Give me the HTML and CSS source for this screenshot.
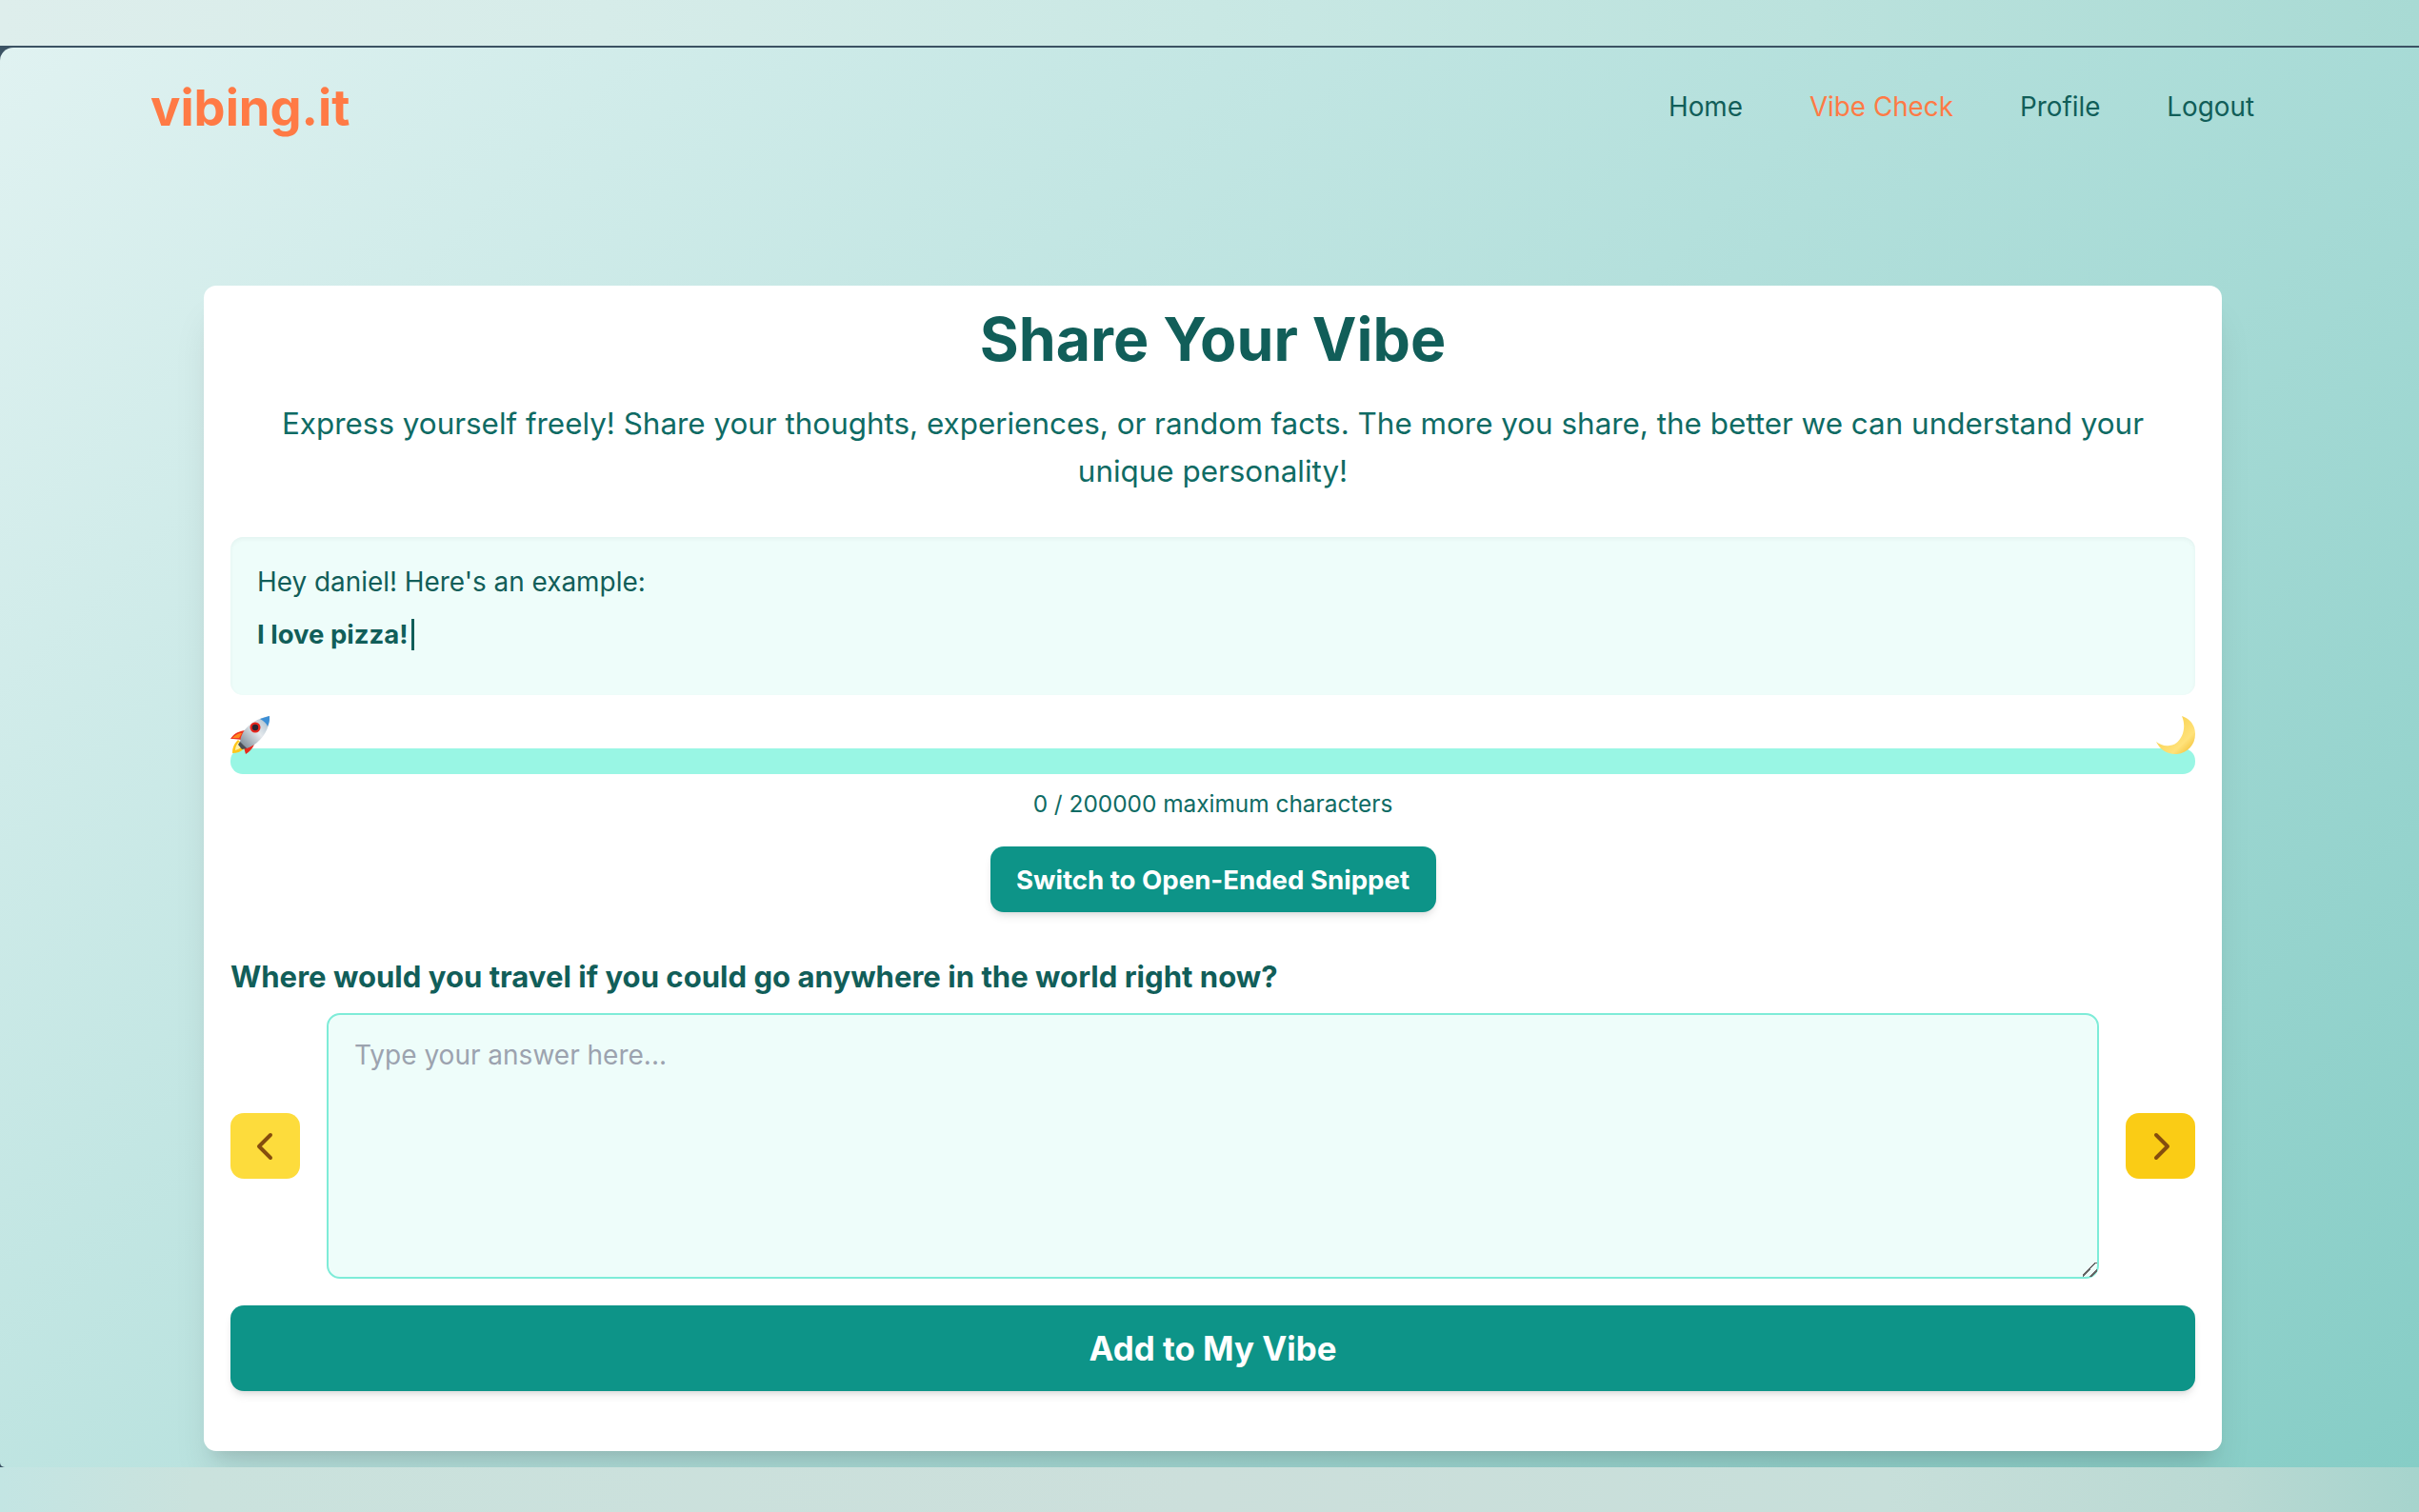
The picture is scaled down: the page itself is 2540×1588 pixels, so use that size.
FILE: index.html
```html
<!DOCTYPE html>
<html lang="en">
<head>
<meta charset="utf-8">
<title>vibing.it</title>
<link rel="stylesheet" href="styles.css">
</head>
<body>
<div class="frame">
  <div class="strip-top"></div>
  <div class="window">
    <div class="page">
      <header class="nav">
        <a class="logo">vibing.it</a>
        <nav class="links">
          <a class="link">Home</a>
          <a class="link active">Vibe Check</a>
          <a class="link">Profile</a>
          <a class="link">Logout</a>
        </nav>
      </header>
      <main class="card">
        <h1 class="title">Share Your Vibe</h1>
        <p class="intro">Express yourself freely! Share your thoughts, experiences, or random facts. The more you share, the better we can understand your unique personality!</p>
        <section class="example">
          <p class="example-hey">Hey daniel! Here's an example:</p>
          <p class="example-text">I love pizza!<span class="caret"></span></p>
        </section>
        <div class="progress-wrap">
          <div class="marks">
            <svg class="mark" viewBox="0 0 41 40" aria-hidden="true">
              <defs>
                <linearGradient id="body" x1="0" y1="1" x2="1" y2="0">
                  <stop offset="0" stop-color="#6f7f8c"/><stop offset=".55" stop-color="#e4e9ed"/><stop offset="1" stop-color="#9fb4c4"/>
                </linearGradient>
              </defs>
              <path d="M2 39c0-6 2-10 6-14l8 8c-4 4-8 6-14 6z" fill="#ffc61a"/>
              <path d="M5 36c0-4 2-7 4-9l4 4c-2 2-4 4-8 5z" fill="#fff0a8"/>
              <path d="M0 24c3-5 9-9 17-9l-6 10c-4-1-8-1-11-1z" fill="#f0351f"/>
              <path d="M2 23c3-3 6-5 10-5l-3 5z" fill="#ff8a1f"/>
              <path d="M16 40c-1-3-2-7-2-10l11-7c2 7-3 13-9 17z" fill="#e8281c"/>
              <path d="M10 28C11 13 25 3 41 0c1 15-11 30-24 34z" fill="url(#body)"/>
              <path d="M31 3l10-3c.5 3-.5 8-2 11-1-3-4-6-8-8z" fill="#3c8fd6"/>
              <circle cx="26" cy="12" r="5.500" fill="#e5251c"/>
              <circle cx="26" cy="12" r="3.200" fill="#2a2430"/>
              <path d="M10 27l7 7-5 1-4-5z" fill="#4a4f57"/>
            </svg>
            <svg class="mark" viewBox="0 0 41 40" aria-hidden="true">
              <defs>
                <linearGradient id="moon" x1="0" y1="0" x2="1" y2="1">
                  <stop offset="0" stop-color="#f6c93a"/><stop offset=".7" stop-color="#ffe27a"/><stop offset="1" stop-color="#eeb622"/>
                </linearGradient>
              </defs>
              <path d="M27 0c9 3 14 10 14 19 0 12-9 21-21 21C11 40 4 35 0 27c4 3 9 5 14 4C26 30 33 14 27 0z" fill="url(#moon)"/>
            </svg>
          </div>
          <div class="progress"></div>
        </div>
        <p class="count">0 / 200000 maximum characters</p>
        <button class="switch">Switch to Open-Ended Snippet</button>
        <h2 class="question">Where would you travel if you could go anywhere in the world right now?</h2>
        <div class="answer-row">
          <button class="arrow prev" aria-label="Previous">
            <svg class="chev" viewBox="0 0 24 32"><path d="M17 4L5 16l12 12"/></svg>
          </button>
          <textarea class="answer" placeholder="Type your answer here..."></textarea>
          <button class="arrow next" aria-label="Next">
            <svg class="chev" viewBox="0 0 24 32"><path d="M7 4l12 12L7 28"/></svg>
          </button>
        </div>
        <button class="submit">Add to My Vibe</button>
      </main>
    </div>
  </div>
  <div class="strip-bottom"></div>
</div>
</body>
</html>
```
FILE: styles.css
```css
* { box-sizing: border-box; }
html, body { margin: 0; height: 100%; }
body { font-family: "Inter", "Liberation Sans", sans-serif; }
p, h1, h2 { margin: 0; }

.frame {
  height: 1588px;
  display: flex;
  flex-direction: column;
  overflow: hidden;
}
.strip-top {
  flex: none;
  height: 48px;
  background: linear-gradient(90deg, #deeeec 0%, #d6ece9 25%, #c9e8e4 50%, #bbe2dd 75%, #a8dad4 100%);
}
.strip-bottom {
  flex: none;
  height: 47px;
  background: linear-gradient(90deg, #c3e5e3 0%, #cae2dd 8%, #ccdfdb 50%, #c7dfda 78%, #bad9d3 92%, #a6d4cd 100%);
}
.window {
  flex: 1;
  min-height: 0;
  background: #3b5263;
  padding-top: 2px;
}
.page {
  height: 100%;
  border-radius: 14px 0 0 5px;
  background: linear-gradient(135deg, #e0f2f1 0%, #86cdc6 100%);
  overflow: hidden;
  padding: 0 0 0 214px;
}

.nav {
  height: 250px;
  margin-left: -55px;
  margin-right: 173px;
  display: flex;
  justify-content: space-between;
  align-items: flex-start;
  padding-top: 32px;
}
.logo { font-size: 52.400px; font-weight: 700; color: #ff7a45; line-height: 62px; margin-left: -1px; }
.links { display: flex; gap: 70px; padding-top: 12px; }
.link { font-size: 27.800px; line-height: 36px; color: #115e59; }
.link.active { color: #ff7a45; }

.card {
  width: 2119px;
  height: 1224px;
  background: #fff;
  border-radius: 13px;
  padding: 0 28px;
  display: flex;
  flex-direction: column;
  box-shadow: 0 32px 40px -8px rgba(0, 0, 0, .1), 0 13px 16px -10px rgba(0, 0, 0, .1);
}
.title {
  margin-top: 17px;
  font-size: 62.600px;
  line-height: 78px;
  font-weight: 700;
  color: #115e59;
  text-align: center;
}
.intro {
  margin-top: 25px;
  font-size: 31.400px;
  line-height: 50px;
  color: #0f6b64;
  text-align: center;
}
.example {
  margin-top: 44px;
  height: 166px;
  background: #eefdfa;
  border-radius: 13px;
  padding: 26px 28px;
  color: #115e59;
  box-shadow: inset 0 2px 4px rgba(0, 60, 60, .05);
}
.example-hey { font-size: 27.900px; line-height: 42px; }
.example-text { margin-top: 13px; font-size: 27.500px; line-height: 42px; font-weight: 700; display: flex; align-items: center; }
.caret { display: inline-block; width: 3px; height: 33px; background: #115e59; margin-left: 3px; }

.progress-wrap { position: relative; margin-top: 22px; height: 61px; }
.marks { height: 40px; display: flex; justify-content: space-between; }
.mark { width: 41px; height: 40px; position: relative; z-index: 1; }
.progress { height: 27px; margin-top: -6px; background: #99f6e4; border-radius: 13px; }

.count { margin-top: 13px; font-size: 24.400px; line-height: 36px; color: #0f6b64; text-align: center; }

.switch {
  align-self: center;
  margin-top: 27px;
  width: 468px;
  height: 69px;
  border: 0;
  border-radius: 14px;
  background: #0d9488;
  color: #fff;
  font: 700 27.600px "Inter", sans-serif;
  box-shadow: 0 6px 10px -2px rgba(0, 0, 0, .1), 0 3px 6px -3px rgba(0, 0, 0, .1);
}
.question { margin-top: 46px; font-size: 31.100px; line-height: 44px; font-weight: 700; color: #115e59; }
.answer-row { margin-top: 16px; display: flex; align-items: center; gap: 28px; }
.arrow {
  flex: none;
  width: 73px;
  height: 69px;
  border: 0;
  border-radius: 14px;
  padding: 0;
  display: flex;
  align-items: center;
  justify-content: center;
}
.prev { background: #fddc3c; }
.next { background: #facc15; }
.chev { width: 24px; height: 32px; fill: none; stroke: #854d0e; stroke-width: 4px; stroke-linecap: round; stroke-linejoin: round; }
.answer {
  flex: 1;
  height: 279px;
  background: #eefdfa;
  border: 2px solid #7eecd8;
  border-radius: 14px;
  padding: 24px 27px;
  font: 400 28px/36px "Inter", sans-serif;
  outline: none;
}
.answer::placeholder { color: #9ca3af; opacity: 1; }
.answer::-webkit-resizer {
  background: linear-gradient(135deg, transparent 42%, #666 42%, #666 50%, transparent 50%, transparent 72%, #666 72%, #666 80%, transparent 80%);
}
.submit {
  margin-top: 28px;
  height: 90px;
  border: 0;
  border-radius: 14px;
  background: #0d9488;
  color: #fff;
  font: 700 34.900px "Inter", sans-serif;
  box-shadow: 0 6px 10px -2px rgba(0, 0, 0, .1), 0 3px 6px -3px rgba(0, 0, 0, .1);
}
```
